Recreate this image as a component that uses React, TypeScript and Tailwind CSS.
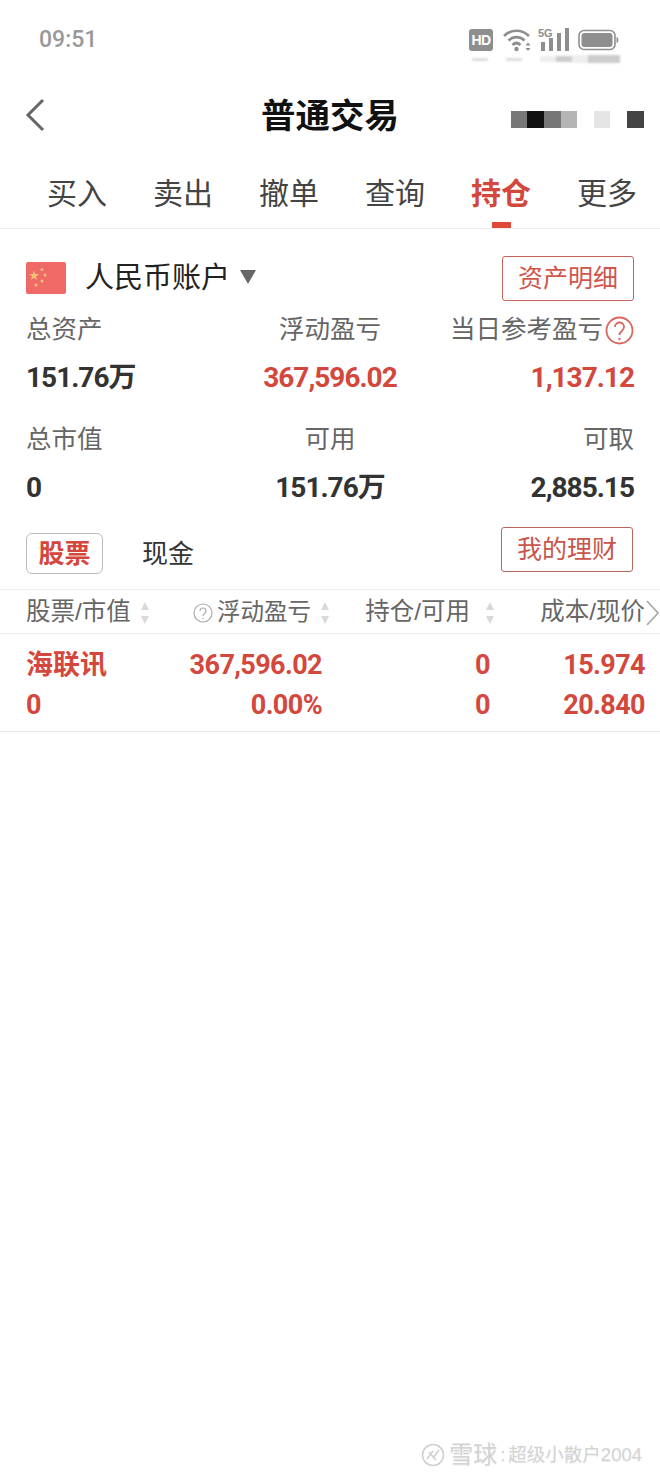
const cjk = "font-['Liberation_Sans','Noto_Sans_CJK_SC',sans-serif]";
const num = "font-['Roboto','Noto_Sans_CJK_SC',sans-serif] font-bold";

const tabs = ["买入", "卖出", "撤单", "查询", "持仓", "更多"];

function Sort() {
  return (
    <svg width="10" height="24" viewBox="0 0 10 24" className="shrink-0">
      <path d="M5 1 L9 9 H1 Z" fill="#d9d9d9" />
      <path d="M5 23 L9 15 H1 Z" fill="#d9d9d9" />
    </svg>
  );
}

function StatusIcons() {
  return (
    <div className="flex items-center">
      <div className="flex h-[22px] w-[24px] items-center justify-center rounded-[3px] bg-[#8e8e8e] text-[14px] leading-none font-bold tracking-[-0.5px] text-white font-['Liberation_Sans',sans-serif]">
        HD
      </div>
      <svg width="30" height="24" viewBox="0 0 30 24" className="ml-[9px]" fill="none" stroke="#8e8e8e" strokeWidth="2.6">
        <path d="M2 8 C9 1 20 1 27 8" />
        <path d="M6.5 12.5 C11 8 18 8 22.5 12.5" />
        <path d="M10.5 17 C13 14.5 16 14.5 18.5 17" />
        <circle cx="14.5" cy="21" r="2.2" fill="#8e8e8e" stroke="none" />
        <path d="M26 14.5 L28.5 17.5 H23.5 Z M26 23 L28.5 20 H23.5 Z" fill="#8e8e8e" stroke="none" />
      </svg>
      <svg width="33" height="24" viewBox="0 0 33 24" className="ml-[6px]" fill="#8e8e8e">
        <text x="0" y="9" fontSize="11" fontWeight="700" fontFamily="Liberation Sans">5G</text>
        <rect x="3" y="14" width="4" height="9" />
        <rect x="11" y="10" width="4" height="13" />
        <rect x="19" y="5" width="4" height="18" />
        <rect x="27" y="0" width="4" height="23" />
      </svg>
      <svg width="42" height="22" viewBox="0 0 42 22" className="ml-[7px]">
        <rect x="1" y="1.5" width="36" height="19" rx="5" fill="none" stroke="#8e8e8e" strokeWidth="1.6" />
        <rect x="3.5" y="4" width="31" height="14" rx="3" fill="#8e8e8e" />
        <path d="M38.5 8 C41 8 41 14 38.5 14 Z" fill="#8e8e8e" />
      </svg>
    </div>
  );
}

function Stat({ label, value, align, red }: { label: React.ReactNode; value: string; align: string; red?: boolean }) {
  return (
    <div className={`flex flex-col ${align}`}>
      <div className="flex h-[32px] items-center text-[25.5px] leading-none whitespace-nowrap text-[#666]">{label}</div>
      <div className={`mt-[17px] h-[30px] text-[28px] leading-[30px] tracking-[-1px] ${num} ${red ? "text-[#d4473c]" : "text-[#333]"}`}>{value}</div>
    </div>
  );
}

export default function App() {
  return (
    <div className={`relative h-[1476px] w-[660px] overflow-hidden bg-white ${cjk}`}>
      {/* status bar */}
      <div className="flex h-[79px] items-start justify-between pt-[28px] pl-[39px] pr-[40px]">
        <span className="text-[23px] leading-[24px] font-medium text-[#999] font-['Roboto',sans-serif]">09:51</span>
        <div className="flex flex-col items-end">
          <StatusIcons />
          <div className="mt-[4px] flex h-[6px] items-center gap-[18px] pr-0 blur-[1px]">
            <div className="h-[3px] w-[16px] bg-[#ddd]" />
            <div className="h-[3px] w-[16px] bg-[#ddd]" />
            <div className="h-[6px] w-[16px] bg-[#eee]" />
            <div className="-ml-[18px] h-[6px] w-[16px] bg-[#ccc]" />
            <div className="-ml-[18px] h-[8px] w-[16px] bg-[#eee]" />
            <div className="-ml-[18px] h-[8px] w-[32px] bg-[#ccc]" />
          </div>
        </div>
      </div>

      {/* title */}
      <div className="relative flex h-[73px] items-center justify-center">
        <svg width="24" height="36" viewBox="0 0 24 36" className="absolute left-[24px] top-[18px]" fill="none" stroke="#666" strokeWidth="3">
          <path d="M19 3 L4 18 L19 33" />
        </svg>
        <h1 className="mt-[2px] text-[34.5px] leading-none font-bold text-[#111]">普通交易</h1>
        <div className="absolute right-[16px] top-[32px] flex h-[17px] blur-[0.4px]">
          <div className="w-[16px] bg-[#777]" />
          <div className="w-[17px] bg-[#111]" />
          <div className="w-[17px] bg-[#777]" />
          <div className="w-[16px] bg-[#b5b5b5]" />
          <div className="ml-[17px] w-[16px] bg-[#e5e5e5]" />
          <div className="ml-[17px] w-[17px] bg-[#444]" />
        </div>
      </div>

      {/* tabs */}
      <div className="grid h-[77px] grid-cols-6 border-b border-[#eee] pl-[24px]">
        {tabs.map((t) => (
          <div key={t} className="relative flex items-start justify-center pt-[26px]">
            <span className={`text-[30px] leading-[32px] ${t === "持仓" ? "font-bold text-[#d4473c]" : "text-[#444]"}`}>{t}</span>
            {t === "持仓" && <div className="absolute bottom-0 h-[6px] w-[19px] bg-[#e0483a]" />}
          </div>
        ))}
      </div>

      {/* account */}
      <div className="px-[26px]">
        <div className="flex h-[74px] items-center justify-between pt-[24px]">
          <div className="flex items-center">
            <svg width="40" height="32" viewBox="0 0 40 32">
              <rect width="40" height="32" rx="2" fill="#ef6a66" />
              <path d="M8 8.5 L9.2 12 H13 L10 14.2 L11 18 L8 15.8 L5 18 L6 14.2 L3 12 H6.8 Z" fill="#f6c27a" />
              <circle cx="16" cy="7.5" r="1.5" fill="#f6c27a" />
              <circle cx="19" cy="13" r="1.5" fill="#f6c27a" />
              <circle cx="16" cy="19" r="1.5" fill="#f6c27a" />
              <circle cx="10" cy="23" r="1.6" fill="#f6c27a" />
            </svg>
            <span className="ml-[19px] text-[29px] leading-none text-[#222]">人民币账户</span>
            <svg width="16" height="14" viewBox="0 0 16 14" className="mb-[2px] ml-[10px]">
              <path d="M0 0 H16 L8 14 Z" fill="#666" />
            </svg>
          </div>
          <div className="flex h-[45px] w-[132px] items-center justify-center rounded-[3px] border border-[#c9615a] text-[25px] leading-none text-[#d0554b]">
            资产明细
          </div>
        </div>

        <div className="grid grid-cols-3 pt-[11px]">
          <Stat label="总资产" value="151.76万" align="items-start" />
          <Stat label="浮动盈亏" value="367,596.02" align="items-center" red />
          <Stat
            label={
              <>
                当日参考盈亏
                <svg width="29" height="29" viewBox="0 0 29 29" className="ml-[2px] shrink-0" fill="none" stroke="#d9675e" strokeWidth="1.8">
                  <circle cx="14.5" cy="14.5" r="13" />
                  <path d="M10 11 C10 5 19 5 19 11 C19 15 14.5 15 14.5 19" />
                  <circle cx="14.5" cy="23" r="1.2" fill="#d9675e" stroke="none" />
                </svg>
              </>
            }
            value="1,137.12"
            align="items-end"
            red
          />
        </div>
        <div className="grid grid-cols-3 pt-[31px]">
          <Stat label="总市值" value="0" align="items-start" />
          <Stat label="可用" value="151.76万" align="items-center" />
          <Stat label="可取" value="2,885.15" align="items-end" />
        </div>

        <div className="flex h-[86px] items-start justify-between pr-[1px] pt-[24px]">
          <div className="flex items-center pt-[6px]">
            <div className="flex h-[41px] w-[77px] items-center justify-center rounded-[6px] border border-[#bbb] text-[26px] leading-none font-bold text-[#d4473c]">
              股票
            </div>
            <span className="ml-[39px] text-[26px] leading-none text-[#333]">现金</span>
          </div>
          <div className="flex h-[45px] w-[132px] items-center justify-center rounded-[3px] border border-[#b9655e] text-[25px] leading-none text-[#c9554b]">
            我的理财
          </div>
        </div>
      </div>

      {/* table */}
      <div className="flex h-[45px] items-center border-y border-[#eee] pl-[26px] pt-[2px] text-[24.5px] leading-none text-[#666]">
        <div className="flex w-[124px] items-center justify-between">
          <span className="whitespace-nowrap">股票/市值</span>
          <Sort />
        </div>
        <div className="flex w-[180px] items-center justify-end gap-[9px]">
          <span className="flex items-center whitespace-nowrap text-[23.5px]">
            <svg width="20" height="20" viewBox="0 0 20 20" className="mr-[4px]" fill="none" stroke="#aaa" strokeWidth="1.2">
              <circle cx="10" cy="10" r="9" />
              <path d="M7 8 C7 4 13 4 13 8 C13 10.5 10 10.5 10 13" />
              <circle cx="10" cy="15.5" r="0.8" fill="#aaa" stroke="none" />
            </svg>
            浮动盈亏
          </span>
          <Sort />
        </div>
        <div className="flex w-[165px] items-center justify-end gap-[15px]">
          <span className="whitespace-nowrap">持仓/可用</span>
          <Sort />
        </div>
        <div className="flex w-[165px] items-center justify-end">
          <span className="whitespace-nowrap">成本/现价</span>
          <svg width="15" height="26" viewBox="0 0 15 26" className="shrink-0" fill="none" stroke="#aaa" strokeWidth="1.8">
            <path d="M2 1 L13 13 L2 25" />
          </svg>
        </div>
      </div>
      <div className="flex h-[98px] flex-col justify-center gap-[10px] border-b border-[#e8e8e8] pl-[26px] pr-[15px] pt-[5px]">
        <Row a="海联讯" b="367,596.02" c="0" d="15.974" />
        <Row a="0" b="0.00%" c="0" d="20.840" />
      </div>

      {/* watermark */}
      <div className="absolute bottom-[9px] right-[18px] flex items-center text-[18.5px] leading-none text-[#d4d4d4] [text-shadow:0_1px_1px_#eee]">
        <svg width="24" height="24" viewBox="0 0 24 24" className="mr-[4px]" fill="none" stroke="#d0d0d0" strokeWidth="1.6">
          <circle cx="12" cy="12" r="10.5" />
          <path d="M6 16 L12 8 M8 9 L15 17 M12 15 L18 7" />
        </svg>
        <span className="text-[24px]">雪球</span>
        <span className="mx-[3px]">:</span>
        <span>超级小散户2004</span>
      </div>
    </div>
  );
}

function Row({ a, b, c, d }: { a: string; b: string; c: string; d: string }) {
  return (
    <div className={`grid h-[30px] grid-cols-[110px_186px_168px_155px] items-center text-[27px] leading-none tracking-[-0.6px] text-[#d4473c] ${num}`}>
      <span className="tracking-normal">{a}</span>
      <span className="text-right">{b}</span>
      <span className="text-right">{c}</span>
      <span className="text-right">{d}</span>
    </div>
  );
}
